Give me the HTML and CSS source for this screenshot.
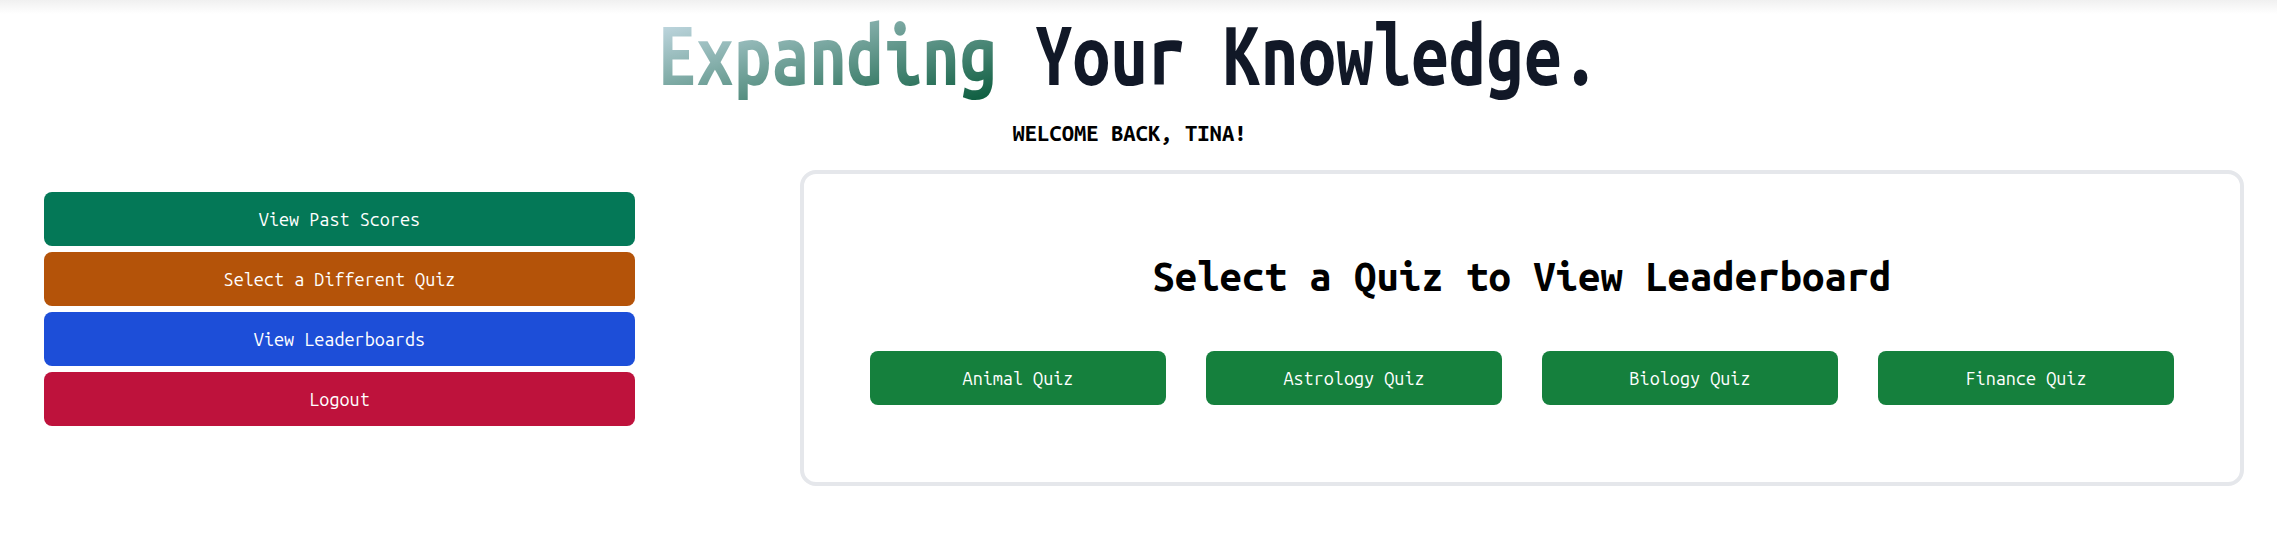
FILE: index.html
```html
<!DOCTYPE html>
<html lang="en">
<head>
<meta charset="utf-8">
<title>Quiz Leaderboards</title>
<link rel="stylesheet" href="styles.css">
</head>
<body>
<div class="topbar"></div>
<header class="hero">
  <h1 class="title"><span class="title-text"><span class="grad">Expanding</span> Your Knowledge.</span></h1>
  <p class="welcome">WELCOME BACK, TINA!</p>
</header>
<main class="layout">
  <nav class="menu">
    <button class="btn btn-emerald">View Past Scores</button>
    <button class="btn btn-amber">Select a Different Quiz</button>
    <button class="btn btn-blue">View Leaderboards</button>
    <button class="btn btn-rose">Logout</button>
  </nav>
  <section class="card">
    <h2 class="card-title">Select a Quiz to View Leaderboard</h2>
    <div class="quiz-grid">
      <button class="btn btn-green">Animal Quiz</button>
      <button class="btn btn-green">Astrology Quiz</button>
      <button class="btn btn-green">Biology Quiz</button>
      <button class="btn btn-green">Finance Quiz</button>
    </div>
  </section>
</main>
</body>
</html>
```
FILE: styles.css
```css
* { box-sizing: border-box; }
body {
  margin: 0;
  background: #ffffff;
  font-family: "Ubuntu Mono", "DejaVu Sans Mono", monospace;
  color: #000;
}
.topbar {
  height: 14px;
  background: linear-gradient(#f0f0f0, #ffffff);
}
.hero {
  text-align: center;
  padding-right: 18px;
}
.title {
  margin: 0;
  font-size: 84px;
  line-height: 80px;
  font-weight: 700;
  color: #111827;
}
.title-text {
  display: inline-block;
  transform: scaleX(0.8);
  transform-origin: center;
}
.grad {
  background: linear-gradient(to bottom right, #d3e4f1, #085a3b);
  -webkit-background-clip: text;
  background-clip: text;
  color: transparent;
}
.welcome {
  margin: 23px 0 0;
  font-size: 22px;
  line-height: 32px;
  font-weight: 700;
}
.layout {
  display: flex;
  align-items: flex-start;
  gap: 165px;
  padding: 21px 33px 0 44px;
}
.menu {
  width: 591px;
  flex: none;
  display: flex;
  flex-direction: column;
  gap: 6px;
  margin-top: 22px;
}
.btn {
  height: 54px;
  border: 0;
  border-radius: 8px;
  color: #fff;
  font-family: "Ubuntu Mono", "DejaVu Sans Mono", monospace;
  font-size: 18px;
  padding: 0;
}
.btn-emerald { background: #047857; }
.btn-amber { background: #b45309; }
.btn-blue { background: #1d4ed8; }
.btn-rose { background: #be123c; }
.btn-green { background: #15803d; }
.card {
  flex: 1;
  border: 4px solid #e5e7eb;
  border-radius: 16px;
  padding: 79px 66px 77px;
}
.card-title {
  margin: 0 0 50px;
  text-align: center;
  font-size: 40px;
  line-height: 48px;
  font-weight: 700;
}
.quiz-grid {
  display: grid;
  grid-template-columns: repeat(4, 1fr);
  gap: 40px;
}
```
